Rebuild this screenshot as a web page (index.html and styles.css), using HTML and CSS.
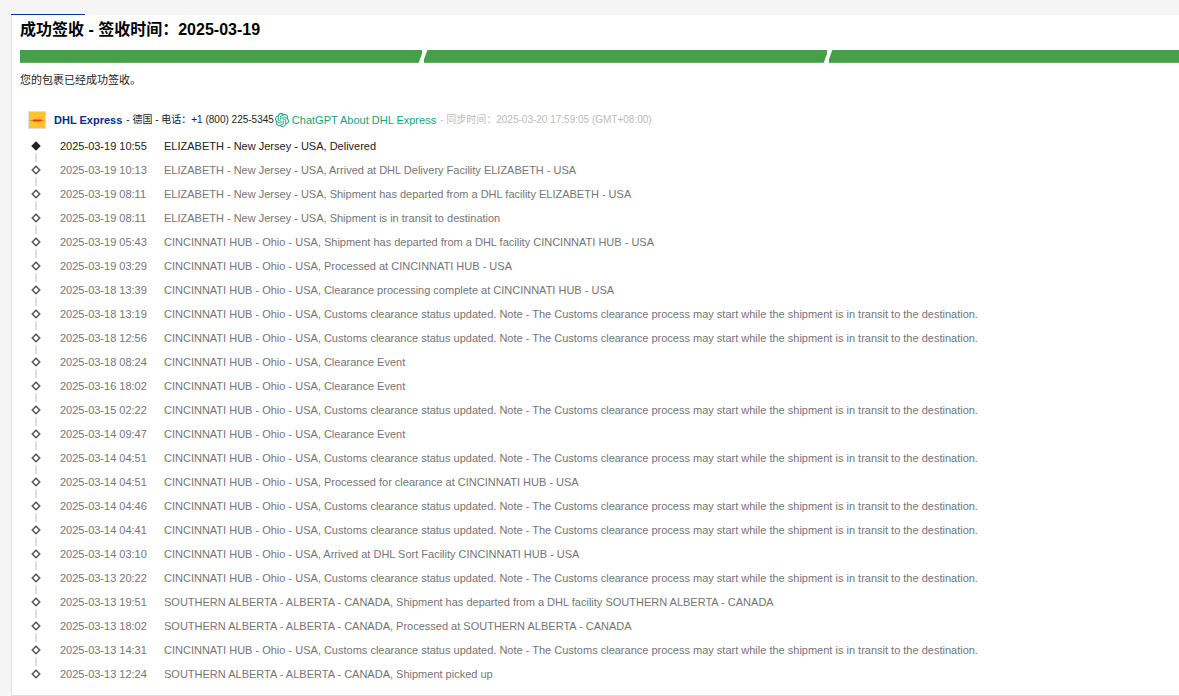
FILE: index.html
```
<!DOCTYPE html>
<html lang="zh-CN">
<head>
<meta charset="utf-8">
<title>DHL Express</title>
<link rel="stylesheet" href="styles.css">
</head>
<body>
<div class="tab-line"></div>
<main class="card">
  <h1 class="title">成功签收 - 签收时间：2025-03-19</h1>
  <div class="progress">
    <span class="step"></span>
    <span class="cut"></span>
    <span class="step"></span>
    <span class="cut"></span>
    <span class="step step-last"></span>
  </div>
  <p class="summary">您的包裹已经成功签收。</p>
  <div class="carrier">
    <svg class="dhl" viewBox="0 0 18 18"><rect x=".5" y=".5" width="17" height="17" fill="#ffc32d" stroke="#dedede"/><path d="M2 9.5h2.6l.8-1.1h8.4l-.5 1.1H16v.5h-3l-.4.6H5l.3-.6H2z" fill="#e0382a"/></svg>
    <a class="carrier-name" href="#">DHL Express</a>
    <span class="contact">- 德国 - 电话：+1 (800) 225-5345</span>
    <svg class="gpt" viewBox="0 0 24 24"><path fill="#10a37f" d="M22.28 9.82a5.98 5.98 0 0 0-.52-4.91 6.05 6.05 0 0 0-6.51-2.9A6.07 6.07 0 0 0 4.98 4.18a5.98 5.98 0 0 0-4 2.9 6.05 6.05 0 0 0 .74 7.1 5.98 5.98 0 0 0 .51 4.91 6.05 6.05 0 0 0 6.52 2.9A5.98 5.98 0 0 0 13.26 24a6.06 6.06 0 0 0 5.77-4.21 5.99 5.99 0 0 0 4-2.9 6.06 6.06 0 0 0-.75-7.07zm-9.02 12.61a4.48 4.48 0 0 1-2.88-1.04l.14-.08 4.78-2.76a.8.8 0 0 0 .39-.68v-6.74l2.02 1.17v5.62a4.5 4.5 0 0 1-4.45 4.51zM3.6 18.3a4.47 4.47 0 0 1-.54-3.01l.14.09 4.79 2.76a.77.77 0 0 0 .78 0l5.84-3.37v2.33L9.74 19.95A4.5 4.5 0 0 1 3.6 18.3zM2.34 7.9a4.49 4.49 0 0 1 2.37-1.98V11.6a.77.77 0 0 0 .39.68l5.81 3.35-2.02 1.17-4.83-2.79A4.5 4.5 0 0 1 2.34 7.9zm16.6 3.86L13.1 8.36l2.02-1.16 4.83 2.79a4.49 4.49 0 0 1-.68 8.1v-5.68a.79.79 0 0 0-.33-.65zm2.01-3.03l-.14-.08-4.78-2.78a.78.78 0 0 0-.78 0L9.41 9.23V6.9l4.83-2.79a4.5 4.5 0 0 1 6.71 4.62zM8.31 12.86l-2.02-1.16V6.07a4.5 4.5 0 0 1 7.37-3.45l-.14.08-4.78 2.76a.8.8 0 0 0-.39.68zm1.1-2.36L12 9l2.61 1.5v3L12 15l-2.6-1.5z"/></svg>
    <a class="gpt-link" href="#">ChatGPT About DHL Express</a>
    <span class="sync">- 同步时间：2025-03-20 17:59:05 (GMT+08:00)</span>
  </div>
  <ol class="events" id="events"></ol>
</main>
<script src="events.js"></script>
</body>
</html>
```
FILE: styles.css
```
* { box-sizing: border-box; }
body {
  margin: 0;
  padding: 14px 0 0 11px;
  background: #f5f5f5;
  color: #222;
  font: 11px/24px "Liberation Sans", Arial, "Noto Sans CJK SC", sans-serif;
}
.tab-line { width: 74px; height: 1px; background: #003594; }
.card {
  background: #fff;
  border-left: 1px solid #ddd;
  border-bottom: 1px solid #ddd;
  padding: 0 0 9px 8px;
}
.title { margin: 0; padding: 3px 0 8px; font-size: 16px; line-height: 24px; color: #000; }
.progress { display: flex; height: 13px; overflow: hidden; }
.step { flex: 403 1 0; background: #43a047; border-bottom: 1px solid #66b16a; }
.step-last { flex-grow: 351; }
.cut {
  flex: none;
  width: 4px;
  margin: 0 -1px;
  background: #fff;
  transform: skewX(-20deg);
}
.summary { margin: 0; padding: 5px 0 16px; }
.carrier { display: flex; align-items: center; height: 24px; margin-left: 8px; white-space: nowrap; }
.dhl { width: 18px; height: 18px; margin-right: 8px; }
.carrier-name { font-weight: bold; color: #003087; text-decoration: none; margin-right: 4px; }
.contact { font-size: 10px; }
.gpt { width: 14px; height: 14px; margin: 0 3px 0 1px; }
.gpt-link { color: #10a37f; text-decoration: none; margin-right: 4px; }
.sync { font-size: 10px; color: #bbb; }
.events { list-style: none; margin: 0; padding: 2px 0 0 10px; color: #757575; }
.event { display: grid; grid-template-columns: 30px 104px 1fr; height: 24px; white-space: nowrap; }
.event:first-child { color: #222; }
.mark { display: flex; flex-direction: column; width: 12px; align-items: center; }
.mark::before, .mark::after { content: ""; width: 2px; background: #ddd; }
.mark::before { height: 4px; margin-bottom: 3px; }
.mark::after { height: 5px; margin-top: 2px; }
.event:first-child .mark::before, .event:last-child .mark::after { background: none; }
.diamond { width: 10px; height: 10px; fill: #fff; stroke: #555; stroke-width: 1.5; }
.event:first-child .diamond { fill: #222; stroke: #222; }
```
FILE: events.js
```
const hub = "CINCINNATI HUB - Ohio - USA, ";
const nj = "ELIZABETH - New Jersey - USA, ";
const ab = "SOUTHERN ALBERTA - ALBERTA - CANADA, ";
const customs = hub + "Customs clearance status updated. Note - The Customs clearance process may start while the shipment is in transit to the destination.";
const events = [
  ["2025-03-19 10:55", nj + "Delivered"],
  ["2025-03-19 10:13", nj + "Arrived at DHL Delivery Facility ELIZABETH - USA"],
  ["2025-03-19 08:11", nj + "Shipment has departed from a DHL facility ELIZABETH - USA"],
  ["2025-03-19 08:11", nj + "Shipment is in transit to destination"],
  ["2025-03-19 05:43", hub + "Shipment has departed from a DHL facility CINCINNATI HUB - USA"],
  ["2025-03-19 03:29", hub + "Processed at CINCINNATI HUB - USA"],
  ["2025-03-18 13:39", hub + "Clearance processing complete at CINCINNATI HUB - USA"],
  ["2025-03-18 13:19", customs],
  ["2025-03-18 12:56", customs],
  ["2025-03-18 08:24", hub + "Clearance Event"],
  ["2025-03-16 18:02", hub + "Clearance Event"],
  ["2025-03-15 02:22", customs],
  ["2025-03-14 09:47", hub + "Clearance Event"],
  ["2025-03-14 04:51", customs],
  ["2025-03-14 04:51", hub + "Processed for clearance at CINCINNATI HUB - USA"],
  ["2025-03-14 04:46", customs],
  ["2025-03-14 04:41", customs],
  ["2025-03-14 03:10", hub + "Arrived at DHL Sort Facility CINCINNATI HUB - USA"],
  ["2025-03-13 20:22", customs],
  ["2025-03-13 19:51", ab + "Shipment has departed from a DHL facility SOUTHERN ALBERTA - CANADA"],
  ["2025-03-13 18:02", ab + "Processed at SOUTHERN ALBERTA - CANADA"],
  ["2025-03-13 14:31", customs],
  ["2025-03-13 12:24", ab + "Shipment picked up"]
];
document.getElementById("events").innerHTML = events.map(([time, text]) =>
  `<li class="event"><span class="mark"><svg class="diamond" viewBox="0 0 10 10"><path d="M5 1.3L8.7 5 5 8.7 1.3 5z"/></svg></span><time>${time}</time><span>${text}</span></li>`
).join("");
```
